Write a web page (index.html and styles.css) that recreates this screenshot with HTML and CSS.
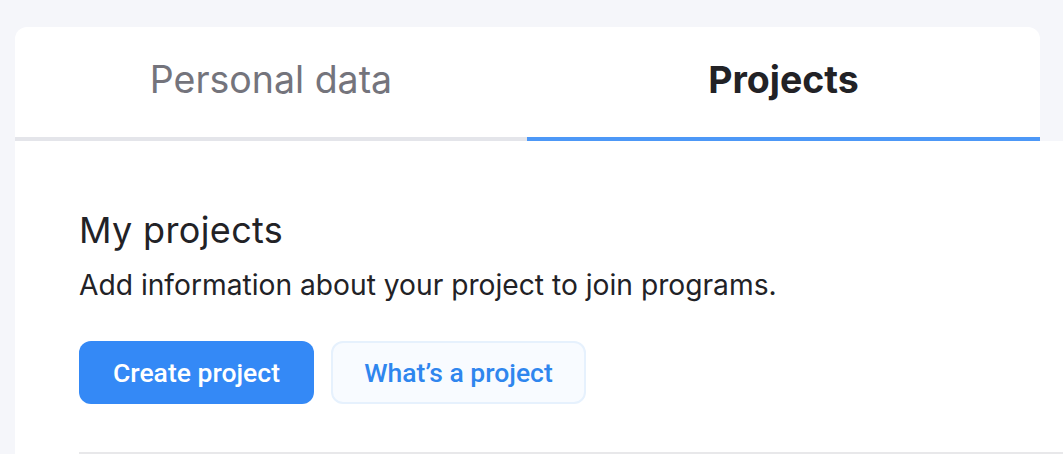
FILE: index.html
```html
<!DOCTYPE html>
<html lang="en">
<head>
<meta charset="utf-8">
<title>Projects</title>
<link rel="stylesheet" href="styles.css">
</head>
<body>
<div class="page">
  <div class="tabs">
    <div class="tab">Personal data</div>
    <div class="tab active">Projects</div>
  </div>
  <div class="content">
    <h2 class="title">My projects</h2>
    <p class="desc">Add information about your project to join programs.</p>
    <div class="actions">
      <button class="btn btn-primary">Create project</button>
      <button class="btn btn-secondary">What’s a project</button>
    </div>
    <div class="divider"></div>
  </div>
</div>
</body>
</html>
```
FILE: styles.css
```css
html, body {
  margin: 0;
  padding: 0;
}
body {
  background: #f5f6fa;
  width: 1063px;
  height: 454px;
  overflow: hidden;
  font-family: Inter, "Noto Sans", sans-serif;
}
.page {
  padding-top: 27px;
  padding-left: 15px;
}
.tabs {
  display: flex;
  width: 1025px;
  background: #ffffff;
  border-radius: 12px 12px 0 0;
}
.tab {
  flex: 0 0 512px;
  height: 105px;
  padding-bottom: 5px;
  box-sizing: content-box;
  border-bottom: 4px solid #e4e5ea;
  display: flex;
  align-items: center;
  justify-content: center;
  font-size: 37.5px;
  color: #74747c;
}
.tab.active {
  flex: 0 0 513px;
  border-bottom-color: #4d98f7;
  color: #222226;
  font-weight: 700;
}
.content {
  background: #ffffff;
  padding: 68px 0 0 64px;
  height: 245px;
  overflow: hidden;
}
.title {
  margin: 0;
  font-weight: 400;
  font-size: 36px;
  letter-spacing: 0.35px;
  line-height: 42px;
  color: #222226;
}
.desc {
  margin: 17px 0 0 0;
  font-size: 28.2px;
  line-height: 34px;
  color: #222226;
}
.actions {
  display: flex;
  gap: 17px;
  margin-top: 39px;
}
.btn {
  height: 63px;
  border-radius: 12px;
  font-family: Roboto, "Liberation Sans", sans-serif;
  font-weight: 500;
  font-size: 26.5px;
  padding: 0;
  cursor: pointer;
}
.btn-primary {
  width: 235px;
  background: #3489f6;
  border: none;
  color: #ffffff;
}
.btn-secondary {
  width: 255px;
  background: #f8fbff;
  border: 2px solid #e6f1fd;
  color: #2f86ee;
}
.divider {
  margin-top: 48px;
  height: 2px;
  background: #e8e8ea;
}
```
